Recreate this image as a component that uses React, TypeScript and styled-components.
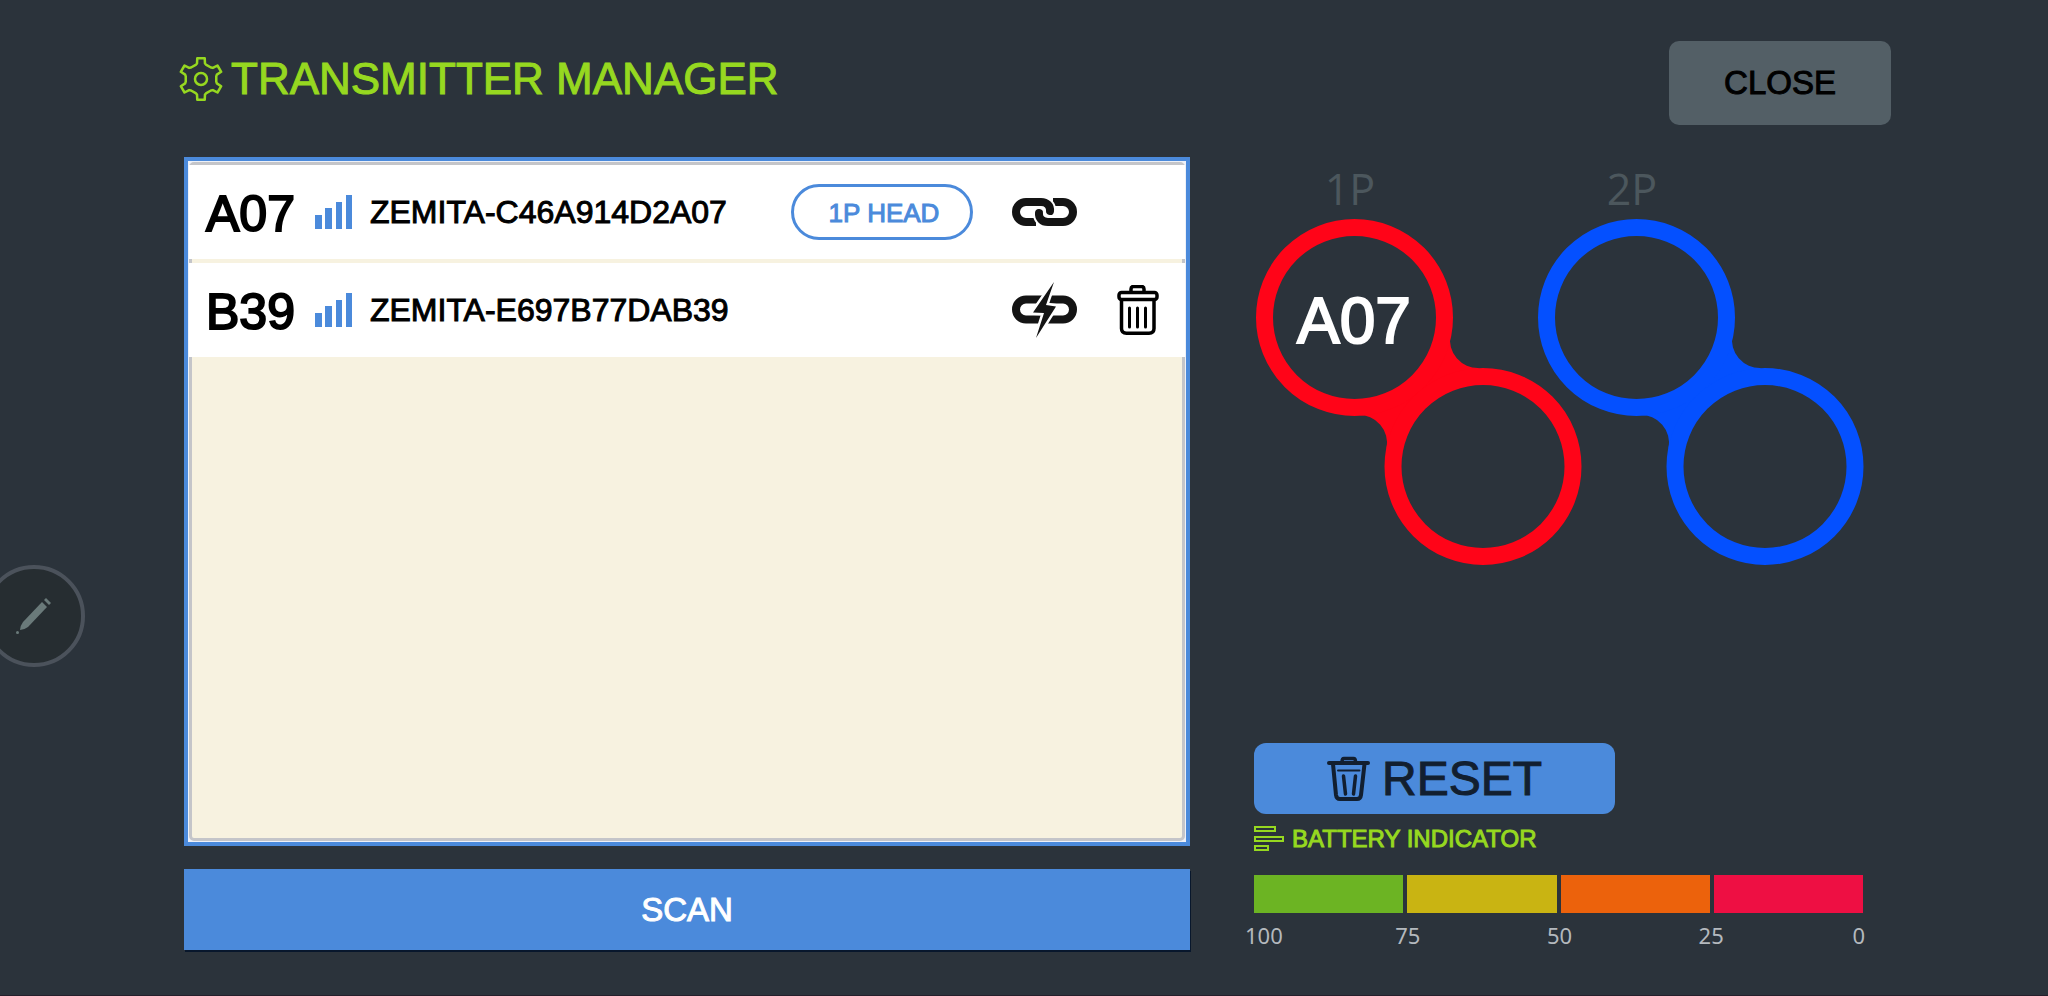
import React from "react";
import styled, { createGlobalStyle } from "styled-components";

const color = {
  page: "#2b333b",
  blue: "#4b8adb",
  lime: "#96d820",
  cream: "#f7f2e0",
  ink: "#141414",
};

const GlobalStyle = createGlobalStyle`
  * { box-sizing: border-box; }
  body {
    margin: 0;
    background: ${color.page};
    font-family: "Liberation Sans", Arial, sans-serif;
  }
  button { font-family: inherit; cursor: pointer; padding: 0; border: 0; }
  h1, h2, ul, p, figure { margin: 0; padding: 0; }
  svg { display: block; flex: none; }
`;

const Page = styled.div`
  min-height: 100vh;
  display: flex;
  flex-direction: column;
  gap: 32px;
  padding: 41px 185px 45px 184px;
  border-bottom: 1px solid #251f2b;
`;

const Header = styled.header`
  display: flex;
  align-items: center;
  justify-content: space-between;
  height: 84px;
  margin: 0 -28px 0 -5px;
`;

const Title = styled.h1`
  display: flex;
  align-items: center;
  gap: 8px;
  height: 76px;
  align-self: flex-start;
  font-size: 44px;
  line-height: 48px;
  font-weight: 400;
  color: ${color.lime};
  -webkit-text-stroke: 1px ${color.lime};
`;

const CloseButton = styled.button`
  width: 222px;
  height: 84px;
  border-radius: 10px;
  background: #535f66;
  color: #000;
  font-size: 33px;
  -webkit-text-stroke: 1px #000;
`;

const Main = styled.main`
  flex: 1;
  display: flex;
  gap: 64px;
`;

const Devices = styled.section`
  flex: 1;
  display: flex;
  flex-direction: column;
  gap: 23px;
`;

const ListFrame = styled.div`
  flex: 1;
  display: flex;
  padding: 1px;
  border: 4px solid ${color.blue};
  background: #eef1f8;
`;

const List = styled.ul`
  flex: 1;
  display: flex;
  flex-direction: column;
  gap: 4px;
  list-style: none;
  border: 3px solid #c4c5c9;
  border-radius: 5px;
  background: ${color.cream};
`;

const Row = styled.li`
  display: flex;
  align-items: center;
  height: 94px;
  margin: 0 -3px;
  padding: 0 26px 0 17px;
  background: #fff;
  color: #000;
`;

const ShortName = styled.span`
  font-size: 50px;
  line-height: 56px;
  padding-top: 4px;
  margin-right: 20px;
  -webkit-text-stroke: 2px #000;
`;

const DeviceId = styled.span`
  flex: 1;
  margin-left: 17px;
  font-size: 32px;
  line-height: 36px;
  -webkit-text-stroke: 1px #000;
`;

const Actions = styled.div`
  display: flex;
  align-items: center;
  gap: 39px;
`;

const RoleButton = styled.button`
  width: 182px;
  height: 56px;
  border: 3px solid ${color.blue};
  border-radius: 28px;
  background: #fff;
  color: ${color.blue};
  font-size: 26px;
  padding: 3px 0 0 4px;
  -webkit-text-stroke: 1px ${color.blue};
`;

const IconButton = styled.button<{ $width: number }>`
  display: flex;
  align-items: center;
  justify-content: center;
  width: ${(p) => p.$width}px;
  height: 60px;
  background: transparent;
`;

const ScanButton = styled.button`
  height: 81px;
  background: ${color.blue};
  color: #fff;
  font-size: 33px;
  box-shadow: 1px 2px 0 #08172c;
  -webkit-text-stroke: 1px #fff;
`;

const Side = styled.section`
  width: 609px;
  display: flex;
  flex-direction: column;
  justify-content: space-between;
`;

const Players = styled.div`
  display: grid;
  grid-template-columns: 282px 282px;
  padding: 4px 0 0 2px;
`;

const Player = styled.figure`
  display: flex;
  flex-direction: column;
`;

const PlayerName = styled.figcaption`
  width: 188px;
  height: 58px;
  text-align: center;
  font-family: "Open Sans", "Noto Sans", sans-serif;
  font-size: 43px;
  line-height: 56px;
  color: #4c575d;
`;

const RingPair = styled.div`
  position: relative;
  svg { overflow: visible; }
`;

const RingLabel = styled.span`
  position: absolute;
  top: 66px;
  left: 0;
  width: 196px;
  text-align: center;
  font-size: 64px;
  line-height: 72px;
  color: #fff;
  -webkit-text-stroke: 2px #fff;
`;

const Footer = styled.div`
  display: flex;
  flex-direction: column;
`;

const ResetButton = styled.button`
  display: flex;
  align-items: center;
  justify-content: center;
  gap: 12px;
  width: 361px;
  height: 71px;
  border-radius: 12px;
  background: ${color.blue};
  color: #121f30;
  font-size: 48px;
  -webkit-text-stroke: 1px #121f30;
`;

const BatteryTitle = styled.h2`
  display: flex;
  align-items: center;
  gap: 7px;
  margin: 11px 0 23px;
  font-size: 24px;
  line-height: 27px;
  font-weight: 400;
  color: ${color.lime};
  -webkit-text-stroke: 1px ${color.lime};
`;

const Scale = styled.div`
  display: grid;
  grid-template-columns: repeat(4, 1fr);
  gap: 4px;
  height: 38px;
`;

const Segment = styled.div<{ $color: string }>`
  background: ${(p) => p.$color};
`;

const Ticks = styled.div`
  display: grid;
  grid-template-columns: 87px 1fr 1fr 1fr 78px;
  margin: 8px -2px 0 -9px;
  font-family: "Noto Sans", "Open Sans", sans-serif;
  font-size: 22px;
  line-height: 29px;
  color: #b4b9be;
  text-align: center;
  span:first-child { text-align: left; }
  span:last-child { text-align: right; }
`;

const EditHandle = styled.button`
  position: fixed;
  left: -17px;
  top: calc(50% + 67px);
  width: 102px;
  height: 102px;
  display: flex;
  align-items: center;
  justify-content: center;
  border: 4px solid #4b525b;
  border-radius: 50%;
  background: #262d31;
`;

const gearPath = (() => {
  const pts: string[] = [];
  for (let i = 0; i < 6; i++) {
    const mid = i * 60 - 90;
    [[-20, 15], [-14, 16], [-10, 21], [10, 21], [14, 16], [20, 15]].forEach(([a, r]) => {
      const t = ((mid + a) * Math.PI) / 180;
      pts.push(`${(22 + (r + 0.5) * Math.cos(t)).toFixed(2)} ${(22 + r * Math.sin(t)).toFixed(2)}`);
    });
  }
  return `M${pts.join("L")}Z`;
})();

const GearIcon = () => (
  <svg width="44" height="44" viewBox="0 0 44 44" fill="none" stroke={color.lime} strokeWidth="2.5" strokeLinejoin="round" aria-hidden="true">
    <path d={gearPath} />
    <circle cx="22" cy="22" r="6" />
  </svg>
);

const SignalIcon = () => (
  <svg width="38" height="34" viewBox="0 0 38 34" fill={color.blue} role="img" aria-label="Signal">
    <rect x="0" y="20" width="7" height="14" />
    <rect x="10" y="13" width="7" height="21" />
    <rect x="21" y="7" width="6" height="27" />
    <rect x="31" y="0" width="6" height="34" />
  </svg>
);

const LinkIcon = () => (
  <svg width="66" height="28" viewBox="0 0 66 28" fill="none" stroke={color.ink} strokeWidth="8" aria-hidden="true">
    <path d="M24 24H14A10 10 0 0 1 14 4H29" />
    <path d="M41 4H51A10 10 0 0 1 51 24H36" />
    <g stroke="#fff" strokeWidth="12">
      <path d="M30 4C35 4 38.500 8 38 13" />
      <path d="M35 24C30 24 26.500 20 27 15" />
    </g>
    <g strokeLinecap="round">
      <path d="M28 4H29C35 4 38.500 8 38 13" />
      <path d="M37 24H36C30 24 26.500 20 27 15" />
    </g>
  </svg>
);

const UnlinkIcon = () => (
  <svg width="66" height="58" viewBox="0 0 66 58" aria-hidden="true">
    <g fill="none" stroke={color.ink} strokeWidth="8">
      <path d="M30 38.500H14A10 10 0 0 1 14 18.500H30" />
      <path d="M35 18.500H51A10 10 0 0 1 51 38.500H34" />
    </g>
    <path d="M42 1L21 31.500L32 32L24 57L44 25.500L34 24Z" fill="#fff" stroke="#fff" strokeWidth="5" />
    <path d="M42 1L21 31.500L32 32L24 57L44 25.500L34 24Z" fill={color.ink} />
  </svg>
);

const DeleteIcon = () => (
  <svg width="42" height="50" viewBox="0 0 42 50" fill="none" stroke="#000" strokeWidth="3.5" strokeLinecap="round" aria-hidden="true">
    <rect x="2" y="7.500" width="38" height="7" rx="2.500" />
    <path d="M14 7V4Q14 1.500 16.500 1.500H24.500Q27 1.500 27 4V7" />
    <path d="M4.500 15V43.500Q4.500 48.200 9.500 48.200H32Q37 48.200 37 43.500V15" />
    <path d="M12.500 23V42M20.500 23V42M28.500 23V42" strokeWidth="3" />
  </svg>
);

const ResetIcon = () => (
  <svg width="43" height="46" viewBox="0 0 43 46" fill="none" stroke="#121f30" strokeWidth="4" strokeLinecap="round" aria-hidden="true">
    <path d="M2 7H41" />
    <path d="M15 6Q15 2.500 17 2.500H26.500Q28.500 2.500 28.500 6" strokeWidth="3.5" />
    <path d="M6 8L9 39Q9.500 43 13 43H30Q33.500 43 34 39L37.500 8" />
    <path d="M11 14.500H32.500" strokeWidth="2" />
    <path d="M16.500 20L18.500 38M28.500 20L26.500 38" strokeWidth="3.500" />
  </svg>
);

const BatteryIcon = () => (
  <svg width="31" height="26" viewBox="0 0 31 26" fill="none" stroke={color.lime} strokeWidth="2" aria-hidden="true">
    <rect x="1" y="1" width="20" height="4" />
    <rect x="1" y="11" width="28" height="4" />
    <rect x="1" y="20" width="13" height="4" />
  </svg>
);

const PencilIcon = () => (
  <svg width="40" height="40" viewBox="0 0 40 40" fill="#6a7a7a" aria-hidden="true">
    <path d="M28 6L33 11L14 31Q10 34 6 34Q6 30 9 26Z" />
    <path d="M30 4L32 2L37 7L35 9Z" />
    <circle cx="3.500" cy="36.500" r="1.500" />
  </svg>
);

const Rings = ({ tint }: { tint: string }) => (
  <svg width="326" height="346" viewBox="0 0 326 346" aria-hidden="true">
    <path fill={tint} d="M194.400 115.900A28 28 0 0 0 223.100 149L130.600 229.100A28 28 0 0 0 101.900 196Z" />
    <g fill={color.page} stroke={tint} strokeWidth="17">
      <circle cx="98.500" cy="98.500" r="90" />
      <circle cx="227" cy="247.500" r="90" />
    </g>
  </svg>
);

interface Device {
  short: string;
  id: string;
  role?: string;
}

const devices: Device[] = [
  { short: "A07", id: "ZEMITA-C46A914D2A07", role: "1P HEAD" },
  { short: "B39", id: "ZEMITA-E697B77DAB39" },
];

const players = [
  { name: "1P", tint: "#ff0418", head: "A07" },
  { name: "2P", tint: "#0450ff", head: "" },
];

const levels = ["#6cb423", "#c9b412", "#ec620c", "#ee0f43"];
const ticks = ["100", "75", "50", "25", "0"];

const DeviceRow = ({ device }: { device: Device }) => (
  <Row>
    <ShortName>{device.short}</ShortName>
    <SignalIcon />
    <DeviceId>{device.id}</DeviceId>
    <Actions>
      {device.role && <RoleButton>{device.role}</RoleButton>}
      <IconButton $width={66} aria-label={device.role ? "Linked" : "Not linked"}>
        {device.role ? <LinkIcon /> : <UnlinkIcon />}
      </IconButton>
      <IconButton $width={42} aria-label="Delete" disabled={!!device.role}>
        {!device.role && <DeleteIcon />}
      </IconButton>
    </Actions>
  </Row>
);

export default function App() {
  return (
    <>
      <GlobalStyle />
      <Page>
        <Header>
          <Title>
            <GearIcon />
            TRANSMITTER MANAGER
          </Title>
          <CloseButton>CLOSE</CloseButton>
        </Header>
        <Main>
          <Devices>
            <ListFrame>
              <List>
                {devices.map((d) => (
                  <DeviceRow key={d.id} device={d} />
                ))}
              </List>
            </ListFrame>
            <ScanButton>SCAN</ScanButton>
          </Devices>
          <Side>
            <Players>
              {players.map((p) => (
                <Player key={p.name}>
                  <PlayerName>{p.name}</PlayerName>
                  <RingPair>
                    <Rings tint={p.tint} />
                    {p.head && <RingLabel>{p.head}</RingLabel>}
                  </RingPair>
                </Player>
              ))}
            </Players>
            <Footer>
              <ResetButton>
                <ResetIcon />
                RESET
              </ResetButton>
              <BatteryTitle>
                <BatteryIcon />
                BATTERY INDICATOR
              </BatteryTitle>
              <Scale>
                {levels.map((c) => (
                  <Segment key={c} $color={c} />
                ))}
              </Scale>
              <Ticks>
                {ticks.map((t) => (
                  <span key={t}>{t}</span>
                ))}
              </Ticks>
            </Footer>
          </Side>
        </Main>
      </Page>
      <EditHandle aria-label="Edit">
        <PencilIcon />
      </EditHandle>
    </>
  );
}
